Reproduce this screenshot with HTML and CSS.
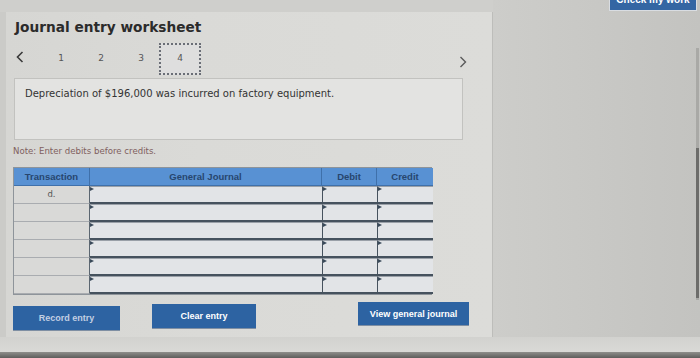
FILE: index.html
```html
<!DOCTYPE html>
<html lang="en">
<head>
<meta charset="utf-8">
<title>Journal entry worksheet</title>
<link rel="stylesheet" href="styles.css">
</head>
<body>
<div class="screen">
  <div class="main">
    <div class="panel">
      <div class="content">
        <h1 class="title">Journal entry worksheet</h1>
        <div class="nav">
          <span class="chev prev">
            <svg width="8" height="12" viewBox="0 0 8 12"><path d="M6.5 1 L1.5 6 L6.5 11" fill="none" stroke="#3a3a3a" stroke-width="1.6"/></svg>
          </span>
          <span class="step">1</span>
          <span class="step">2</span>
          <span class="step">3</span>
          <span class="step current">4</span>
          <span class="spacer"></span>
          <span class="chev next">
            <svg width="8" height="12" viewBox="0 0 8 12"><path d="M1.5 1 L6.5 6 L1.5 11" fill="none" stroke="#5a5a5a" stroke-width="1.4"/></svg>
          </span>
        </div>
        <div class="desc">Depreciation of $196,000 was incurred on factory equipment.</div>
        <p class="note">Note: Enter debits before credits.</p>
        <div class="journal">
          <div class="hcell">Transaction</div>
          <div class="hcell">General Journal</div>
          <div class="hcell">Debit</div>
          <div class="hcell last">Credit</div>

          <div class="tcell">d.</div><div class="icell"></div><div class="icell"></div><div class="icell"></div>
          <div class="tcell"></div><div class="icell"></div><div class="icell"></div><div class="icell"></div>
          <div class="tcell"></div><div class="icell"></div><div class="icell"></div><div class="icell"></div>
          <div class="tcell"></div><div class="icell"></div><div class="icell"></div><div class="icell"></div>
          <div class="tcell"></div><div class="icell"></div><div class="icell"></div><div class="icell"></div>
          <div class="tcell"></div><div class="icell"></div><div class="icell"></div><div class="icell"></div>
        </div>
        <div class="actions">
          <button class="btn record">Record entry</button>
          <button class="btn clear">Clear entry</button>
          <button class="btn view">View general journal</button>
        </div>
      </div>
    </div>
    <div class="side">
      <button class="btn check">Check my work</button>
      <div class="track"><div class="thumb"></div></div>
    </div>
  </div>
  <div class="footer"></div>
  <div class="bezel"></div>
</div>
</body>
</html>
```

FILE: styles.css
```css
* { box-sizing: border-box; }
html, body { margin: 0; padding: 0; }
body {
  width: 700px;
  height: 358px;
  overflow: hidden;
  background: #c9c9c6;
  font-family: "Liberation Sans", Arial, sans-serif;
  color: #333;
}
.screen {
  display: flex;
  flex-direction: column;
  height: 358px;
}
.main {
  display: flex;
  height: 337px;
  background: linear-gradient(to bottom, #cfcfcc 0, #cfcfcc 12px, #cbcbc8 12px);
}
.panel {
  width: 487px;
  margin-left: 6px;
  margin-top: 12px;
  height: 325px;
  background: linear-gradient(to right, #d6d6d3 0, #dadad7 40%, #dcdcd9 100%);
  border-right: 1px solid #bdbdba;
}
.content {
  padding-left: 7px;
  width: 470px;
}
.title {
  margin: 7px 0 0 2px;
  font-family: "DejaVu Sans", Verdana, sans-serif;
  font-weight: bold;
  font-size: 13.7px;
  line-height: 16px;
  color: #2b2b2b;
}
.nav {
  display: flex;
  align-items: center;
  height: 32px;
  margin-top: 8px;
  width: 456px;
}
.chev { display: flex; align-items: center; }
.prev { width: 28px; padding-left: 3px; margin-top: -4px; }
.next { margin-top: 6px; margin-right: 2px; }
.spacer { flex: 1; }
.step {
  width: 40px;
  text-align: center;
  font-family: "DejaVu Sans", Verdana, sans-serif;
  font-size: 9px;
  color: #555;
  margin-top: -3px;
}
.step.current {
  width: 42px;
  height: 32px;
  margin-left: -2px;
  margin-top: 0;
  border: 2px dotted #6a6e76;
  display: flex;
  align-items: center;
  justify-content: center;
  padding-bottom: 3px;
  background: #dedede;
}
.desc {
  margin: 3px 0 0 1px;
  width: 449px;
  height: 62px;
  background: #e3e3e1;
  border: 1px solid #c2c2bf;
  padding: 9px 0 0 10px;
  font-family: "DejaVu Sans", Verdana, sans-serif;
  font-size: 10px;
  line-height: 12px;
  color: #333;
}
.note {
  margin: 6px 0 0 0;
  font-family: "DejaVu Sans", Verdana, sans-serif;
  font-size: 8.6px;
  line-height: 10px;
  color: #80605e;
}
.journal {
  margin-top: 11px;
  display: grid;
  grid-template-columns: 76px 232px 55px 56px;
  grid-auto-rows: 18px;
  width: 419px;
  border: 1px solid #8e949a;
  background: #d8d8d6;
}
.hcell {
  background: #5891d3;
  border-right: 1px solid #3f70aa;
  border-bottom: 1px solid #3f70aa;
  font-weight: bold;
  font-size: 9.5px;
  color: #27466e;
  display: flex;
  align-items: center;
  justify-content: center;
}
.hcell.last { border-right: none; }
.tcell {
  background: #d9d9d7;
  border-bottom: 1px solid #a9acb0;
  border-right: 1px solid #5b6670;
  font-family: "DejaVu Sans", Verdana, sans-serif;
  font-size: 8.5px;
  color: #555;
  display: flex;
  justify-content: center;
  padding-top: 3px;
}
.icell {
  position: relative;
  background: #e2e4e7;
  border-left: 1px solid #46525e;
  border-top: 1px solid #9aa0a8;
  border-bottom: 2px solid #46525e;
}
.icell:nth-child(4n+2) { border-left: none; }
.icell::before {
  content: "";
  position: absolute;
  left: 0;
  top: 0;
  border-left: 4px solid #3a4a5a;
  border-top: 2px solid transparent;
  border-bottom: 2px solid transparent;
}
.actions {
  display: flex;
  align-items: flex-start;
  margin-top: 9px;
}
.btn {
  border: none;
  background: #2d63a2;
  color: #fff;
  font-family: "Liberation Sans", Arial, sans-serif;
  font-weight: bold;
  font-size: 9px;
  height: 24px;
  padding: 0;
  box-shadow: 0 1px 0 #7f8fa3;
}
.record { width: 107px; margin-top: 2px; color: #c2cfe2; }
.clear { width: 104px; margin-left: 32px; }
.view { width: 111px; margin-left: 102px; margin-top: -2px; height: 23px; }
.side {
  flex: 1;
  display: flex;
  flex-direction: column;
  align-items: flex-end;
  background: linear-gradient(to right, #cdcdca, #c3c3c0);
}
.check {
  width: 86px;
  height: 22px;
  margin-top: -12px;
  margin-right: 4px;
  font-size: 10px;
  line-height: 10px;
  padding-top: 2px;
  background: #3466a3;
  box-shadow: 0 0 0 1px #d9dde2;
}
.track {
  margin-top: 38px;
  margin-right: 1px;
  width: 3px;
  height: 252px;
  background: #a9a9a6;
}
.thumb {
  margin-top: 100px;
  height: 150px;
  background: #6d6d6b;
}
.footer {
  height: 15px;
  background: linear-gradient(to bottom, #d2d2cf, #d9d9d6);
}
.bezel {
  height: 6px;
  background: linear-gradient(to bottom, #8e8e8b, #5e5e5c);
}
```
